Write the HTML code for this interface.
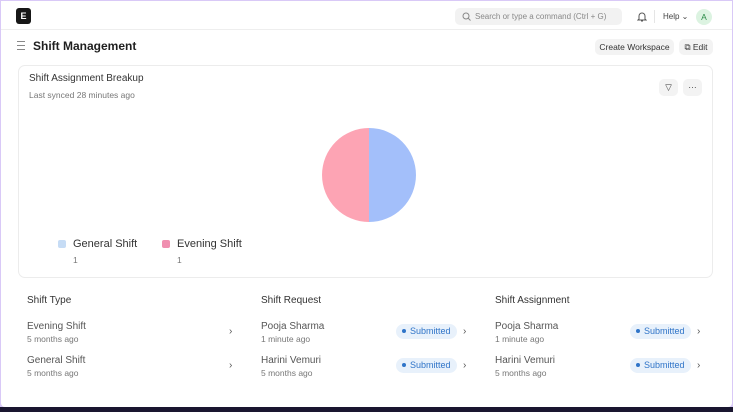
<!DOCTYPE html>
<html><head><style>
*{box-sizing:border-box;margin:0;padding:0}
body{width:733px;height:412px;background:#d9c9f7;font-family:"Liberation Sans",sans-serif;overflow:hidden;position:relative}
.bot{position:absolute;left:0;top:407px;width:733px;height:5px;background:#1a1630}
.page{position:absolute;left:1px;top:1px;width:731px;height:406px;background:#fff;border-radius:0 0 4px 4px}
.abs{position:absolute}
.t{color:#333;font-size:10px}
.s{color:#777;font-size:8.5px}
.badge{position:absolute;background:#e8f1fb;color:#2f74c8;font-size:9px;border-radius:8px;padding:2px 6px 2px 6px;height:15px;line-height:11px}
.badge:before{content:"";display:inline-block;width:4px;height:4px;border-radius:2px;background:#2f74c8;margin-right:4px;vertical-align:1px}
.chev{position:absolute;color:#555;font-size:10px}
.btn{position:absolute;background:#f3f3f3;border-radius:5px;font-size:8.5px;color:#333;text-align:center;line-height:16px;height:16px}
</style></head><body>
<div class="bot"></div>
<div class="page">
<div class="abs" style="left:0;top:0;width:731px;height:29px;border-bottom:1px solid #eee"></div>
<div class="abs" style="left:15px;top:7px;width:15px;height:16px;background:#171717;border-radius:3px;color:#fff;font-size:9px;font-weight:bold;text-align:center;line-height:16px">E</div>
<div class="abs" style="left:454px;top:7px;width:167px;height:17px;background:#f2f2f2;border-radius:5px;font-size:8px;color:#888;line-height:17px;padding-left:20px">Search or type a command (Ctrl + G)</div>
<svg class="abs" style="left:461px;top:11px" width="9" height="9"><circle cx="4" cy="4" r="3" fill="none" stroke="#888"/><path d="M6 6l2.5 2.5" stroke="#888"/></svg>
<svg class="abs" style="left:636px;top:10px" width="10" height="11"><path d="M2 8V5a3 3 0 016 0v3l1 1H1z M4 10h2" fill="none" stroke="#555" stroke-width="1"/></svg>
<div class="abs" style="left:653px;top:9px;width:1px;height:13px;background:#e5e5e5"></div>
<div class="abs" style="left:662px;top:11px;font-size:8px;color:#444">Help ⌄</div>
<div class="abs" style="left:695px;top:8px;width:16px;height:16px;border-radius:8px;background:#dcf3e1;color:#2a8a47;font-size:8.5px;text-align:center;line-height:16px">A</div>
<div class="abs" style="left:16px;top:40px;width:8px;height:9px;border-top:1px solid #888;border-bottom:1px solid #888"></div>
<div class="abs" style="left:16px;top:44px;width:8px;height:1px;background:#888"></div>
<div class="abs" style="left:32px;top:38px;font-size:12px;font-weight:bold;color:#1f1f1f">Shift Management</div>
<div class="btn" style="left:594px;top:38px;width:79px">Create Workspace</div>
<div class="btn" style="left:678px;top:38px;width:34px">⧉ Edit</div>
<div class="abs" style="left:17px;top:64px;width:695px;height:213px;border:1px solid #ececec;border-radius:7px"></div>
<div class="abs t" style="left:28px;top:72px">Shift Assignment Breakup</div>
<div class="abs s" style="left:28px;top:89px">Last synced 28 minutes ago</div>
<div class="btn" style="left:658px;top:78px;width:19px;height:17px">▽</div>
<div class="btn" style="left:682px;top:78px;width:19px;height:17px">···</div>
<svg class="abs" style="left:320px;top:126px" width="96" height="96"><path d="M48 1A47 47 0 0 1 48 95Z" fill="#a3bffa"/><path d="M48 1A47 47 0 0 0 48 95Z" fill="#fda4b4"/></svg>
<div class="abs" style="left:57px;top:239px;width:8px;height:8px;border-radius:2px;background:#c6dcf5"></div>
<div class="abs" style="left:72px;top:237px;font-size:11px;color:#333">General Shift</div>
<div class="abs s" style="left:72px;top:254px">1</div>
<div class="abs" style="left:161px;top:239px;width:8px;height:8px;border-radius:2px;background:#f08fb0"></div>
<div class="abs" style="left:176px;top:237px;font-size:11px;color:#333">Evening Shift</div>
<div class="abs s" style="left:176px;top:254px">1</div>

<div class="abs t" style="left:26px;top:294px">Shift Type</div>
<div class="abs t" style="left:260px;top:294px">Shift Request</div>
<div class="abs t" style="left:494px;top:294px">Shift Assignment</div>

<div class="abs t" style="left:26px;top:320px;color:#555">Evening Shift</div><div class="abs s" style="left:26px;top:333px">5 months ago</div><div class="chev" style="left:228px;top:325px">›</div>
<div class="abs t" style="left:26px;top:354px;color:#555">General Shift</div><div class="abs s" style="left:26px;top:367px">5 months ago</div><div class="chev" style="left:228px;top:359px">›</div>

<div class="abs t" style="left:260px;top:320px;color:#555">Pooja Sharma</div><div class="abs s" style="left:260px;top:333px">1 minute ago</div><div class="badge" style="left:395px;top:323px">Submitted</div><div class="chev" style="left:462px;top:325px">›</div>
<div class="abs t" style="left:260px;top:354px;color:#555">Harini Vemuri</div><div class="abs s" style="left:260px;top:367px">5 months ago</div><div class="badge" style="left:395px;top:357px">Submitted</div><div class="chev" style="left:462px;top:359px">›</div>

<div class="abs t" style="left:494px;top:320px;color:#555">Pooja Sharma</div><div class="abs s" style="left:494px;top:333px">1 minute ago</div><div class="badge" style="left:629px;top:323px">Submitted</div><div class="chev" style="left:696px;top:325px">›</div>
<div class="abs t" style="left:494px;top:354px;color:#555">Harini Vemuri</div><div class="abs s" style="left:494px;top:367px">5 months ago</div><div class="badge" style="left:629px;top:357px">Submitted</div><div class="chev" style="left:696px;top:359px">›</div>
</div>
</body></html>
